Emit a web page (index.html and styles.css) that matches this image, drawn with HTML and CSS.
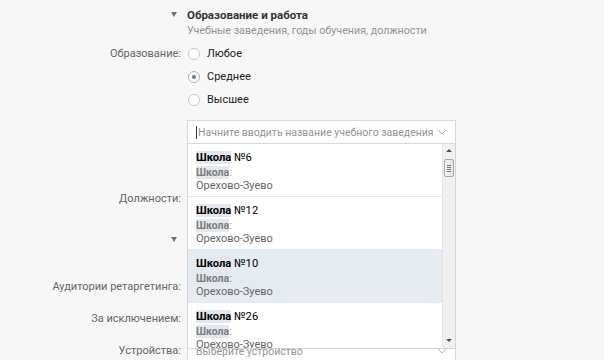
FILE: index.html
```html
<!DOCTYPE html>
<html lang="ru">
<head>
    <meta charset="UTF-8">
    <meta name="viewport" content="width=device-width, initial-scale=1.0">
    <title>Образование и работа</title>
    <link rel="stylesheet" href="styles.css">
</head>
<body>

<div class="form">
    <div class="row section-row">
        <div class="label"><span class="tri"></span></div>
        <div class="field">
            <div class="section-title">Образование и работа</div>
            <div class="section-sub">Учебные заведения, годы обучения, должности</div>
        </div>
    </div>

    <div class="row radio-row">
        <div class="label">Образование:</div>
        <div class="field">
            <div class="radio"><span class="radio-dot"></span>Любое</div>
            <div class="radio checked"><span class="radio-dot"></span>Среднее</div>
            <div class="radio"><span class="radio-dot"></span>Высшее</div>
        </div>
    </div>

    <div class="row school-row">
        <div class="label"></div>
        <div class="field select-wrap">
            <div class="select focused">
                <span class="caret"></span>
                <span class="placeholder">Начните вводить название учебного заведения</span>
                <svg class="chevron" width="10" height="6" viewBox="0 0 10 6"><polyline points="0.5,0.5 5,5 9.5,0.5" fill="none" stroke="#aab2bd" stroke-width="1"/></svg>
            </div>

            <div class="dropdown">
                <div class="dropdown-list">
                    <div class="item">
                        <div class="item-title"><b class="hl">Школа</b> №6</div>
                        <div class="item-type"><b class="hl">Школа</b>:</div>
                        <div class="item-city">Орехово-Зуево</div>
                    </div>
                    <div class="item">
                        <div class="item-title"><b class="hl">Школа</b> №12</div>
                        <div class="item-type"><b class="hl">Школа</b>:</div>
                        <div class="item-city">Орехово-Зуево</div>
                    </div>
                    <div class="item hover">
                        <div class="item-title"><b class="hl">Школа</b> №10</div>
                        <div class="item-type"><b class="hl">Школа</b>:</div>
                        <div class="item-city">Орехово-Зуево</div>
                    </div>
                    <div class="item">
                        <div class="item-title"><b class="hl">Школа</b> №26</div>
                        <div class="item-type"><b class="hl">Школа</b>:</div>
                        <div class="item-city">Орехово-Зуево</div>
                    </div>
                </div>
                <div class="scrollbar">
                    <span class="arrow-up"></span>
                    <span class="thumb"><i></i><i></i><i></i><i></i></span>
                    <span class="arrow-down"></span>
                </div>
            </div>
        </div>
    </div>

    <div class="row field-row jobs-row">
        <div class="label">Должности:</div>
        <div class="field"><div class="select"></div></div>
    </div>

    <div class="row section-row second-section">
        <div class="label"><span class="tri"></span></div>
        <div class="field"></div>
    </div>

    <div class="row field-row retarget-row">
        <div class="label">Аудитории ретаргетинга:</div>
        <div class="field"><div class="select"></div></div>
    </div>

    <div class="row field-row">
        <div class="label">За исключением:</div>
        <div class="field"><div class="select"></div></div>
    </div>

    <div class="row field-row">
        <div class="label">Устройства:</div>
        <div class="field">
            <div class="select">
                <span class="placeholder">Выберите устройство</span>
                <svg class="chevron" width="10" height="6" viewBox="0 0 10 6"><polyline points="0.5,0.5 5,5 9.5,0.5" fill="none" stroke="#aab2bd" stroke-width="1"/></svg>
            </div>
        </div>
    </div>
</div>

</body>
</html>
```

FILE: styles.css
```css
body {
    margin: 0;
    background: #f7f7f7;
    font-family: Roboto, "Open Sans", Arial, sans-serif;
    font-size: 11px;
    color: #222;
    overflow: hidden;
}
.form {
    padding-top: 7px;
    height: 360px;
}
.row {
    display: grid;
    grid-template-columns: 181px 269px;
    column-gap: 6px;
}
.label {
    text-align: right;
    color: #656565;
    line-height: 24px;
}
.field {
    min-width: 0;
}

/* section headers */
.section-row .label {
    line-height: 16px;
}
.tri {
    display: inline-block;
    width: 0;
    height: 0;
    border-left: 3px solid transparent;
    border-right: 3px solid transparent;
    border-top: 5px solid #6f737a;
    margin-right: 4px;
    vertical-align: 1px;
}
.section-title {
    font-weight: bold;
    font-size: 11.5px;
    line-height: 16px;
    color: #333;
}
.section-sub {
    line-height: 16px;
    font-size: 10.7px;
    color: #939393;
}
.second-section {
    margin-top: 21px;
}

/* radios */
.radio-row {
    margin-top: 3px;
}
.radio-row .label {
    line-height: 23px;
}
.radio {
    display: flex;
    align-items: center;
    height: 23px;
    color: #222;
}
.radio-dot {
    box-sizing: border-box;
    width: 12px;
    height: 12px;
    border: 1px solid #c4cad1;
    border-radius: 50%;
    background: #fff;
    margin: 0 7px 0 1px;
    display: flex;
    align-items: center;
    justify-content: center;
}
.radio.checked .radio-dot {
    border-color: #aab4bf;
}
.radio.checked .radio-dot::after {
    content: "";
    width: 4px;
    height: 4px;
    border-radius: 50%;
    background: #6a7b8f;
}

/* inputs */
.school-row {
    margin-top: 9px;
}
.select-wrap {
    position: relative;
}
.select {
    box-sizing: border-box;
    height: 24px;
    border: 1px solid #d3d9de;
    background: #fff;
    padding: 0 8px;
    display: flex;
    align-items: center;
}
.caret {
    width: 1px;
    height: 13px;
    background: #333;
    margin-right: 1px;
}
.placeholder {
    flex: 1;
    font-size: 10.5px;
    color: #939393;
    white-space: nowrap;
    overflow: hidden;
}
.chevron {
    margin-left: 4px;
}
.jobs-row {
    margin-top: 43px;
}
.second-section .field {
    height: 16px;
}
.retarget-row {
    margin-top: 27px;
}
.field-row + .field-row {
    margin-top: 8px;
}

/* dropdown */
.dropdown {
    position: absolute;
    top: 24px;
    left: 0;
    right: 0;
    height: 205px;
    box-sizing: border-box;
    border: 1px solid #cfd4d9;
    border-top: none;
    background: #fff;
    display: flex;
    overflow: hidden;
    z-index: 2;
}
.dropdown-list {
    flex: 1;
}
.item {
    height: 53px;
    padding: 6px 8px 0;
    box-sizing: border-box;
    border-bottom: 1px solid #e7e8ec;
}
.item.hover {
    background: #e5ebf1;
}
.hl {
    background: #e3e8ee;
}
.item-title {
    font-size: 11.2px;
    line-height: 16px;
    color: #000;
}
.item-type {
    font-size: 10.5px;
    line-height: 14px;
    color: #7d7d7d;
}
.item-city {
    font-size: 11px;
    line-height: 12px;
    color: #656565;
}

/* fake scrollbar */
.scrollbar {
    width: 13px;
    background: #f0f0f0;
    border-left: 1px solid #e4e4e4;
    box-sizing: border-box;
    display: flex;
    flex-direction: column;
    align-items: center;
    padding: 5px 0 6px;
}
.arrow-up, .arrow-down {
    width: 0;
    height: 0;
    border-left: 3px solid transparent;
    border-right: 3px solid transparent;
}
.arrow-up {
    border-bottom: 3px solid #505050;
}
.arrow-down {
    border-top: 3px solid #505050;
    margin-top: auto;
}
.thumb {
    box-sizing: border-box;
    width: 10px;
    height: 18px;
    margin-top: 7px;
    border: 1px solid #a7a7a7;
    border-radius: 2px;
    background: linear-gradient(to right, #f4f4f4, #e4e4e4);
    display: flex;
    flex-direction: column;
    justify-content: center;
    align-items: center;
    gap: 1px;
}
.thumb i {
    width: 4px;
    height: 1px;
    background: #777;
}
```
